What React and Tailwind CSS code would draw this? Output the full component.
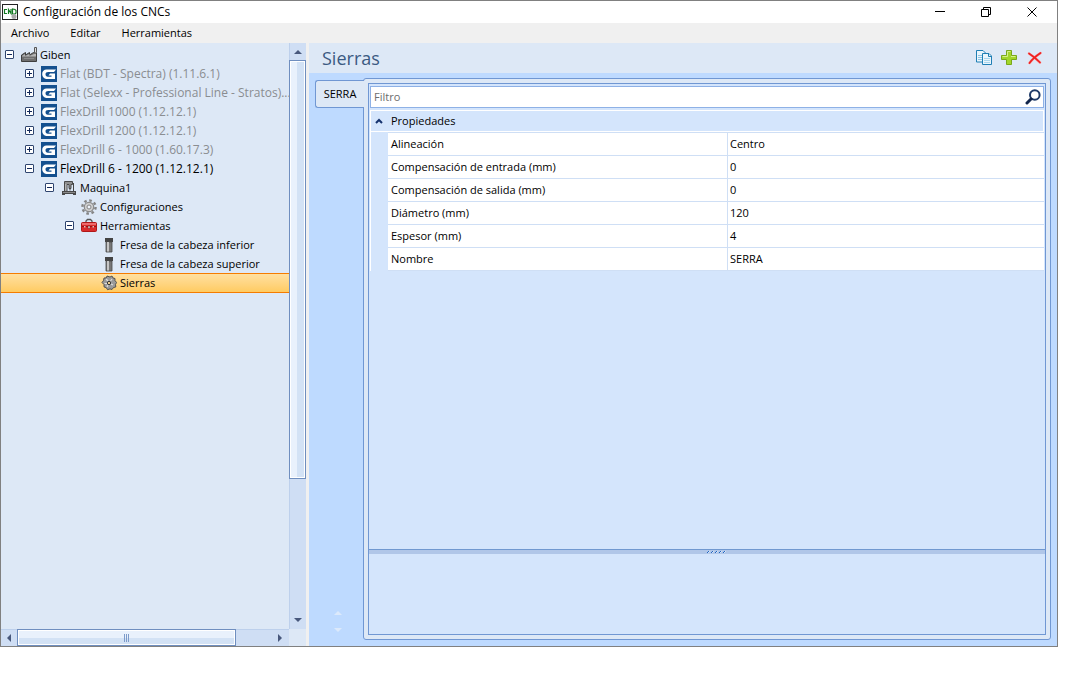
import React, { useState } from 'react'

const tree = [
  { label: 'Giben', level: 0, icon: 'factory', state: 'open' },
  { label: 'Flat (BDT - Spectra) (1.11.6.1)', level: 1, icon: 'giben', state: 'closed', muted: true },
  { label: 'Flat (Selexx - Professional Line - Stratos)...', level: 1, icon: 'giben', state: 'closed', muted: true },
  { label: 'FlexDrill 1000 (1.12.12.1)', level: 1, icon: 'giben', state: 'closed', muted: true },
  { label: 'FlexDrill 1200 (1.12.12.1)', level: 1, icon: 'giben', state: 'closed', muted: true },
  { label: 'FlexDrill 6 - 1000 (1.60.17.3)', level: 1, icon: 'giben', state: 'closed', muted: true },
  { label: 'FlexDrill 6 - 1200 (1.12.12.1)', level: 1, icon: 'giben', state: 'open' },
  { label: 'Maquina1', level: 2, icon: 'machine', state: 'open' },
  { label: 'Configuraciones', level: 3, icon: 'gear' },
  { label: 'Herramientas', level: 3, icon: 'toolbox', state: 'open' },
  { label: 'Fresa de la cabeza inferior', level: 4, icon: 'cutter' },
  { label: 'Fresa de la cabeza superior', level: 4, icon: 'cutter' },
  { label: 'Sierras', level: 4, icon: 'saw' }
]

const properties = [
  ['Alineación', 'Centro'],
  ['Compensación de entrada (mm)', '0'],
  ['Compensación de salida (mm)', '0'],
  ['Diámetro (mm)', '120'],
  ['Espesor (mm)', '4'],
  ['Nombre', 'SERRA']
]

const indent = ['pl-1', 'pl-6 text-xs', 'pl-11', 'pl-16', 'pl-[84px]']

const icons = {
  factory: (
    <>
      <path d="M.5 14.500V8l4-2.500V8l4-2.500V8l4-2.500h3v9z" fill="#6e6e6e" stroke="#3f3f3f" />
      <path d="M1 9l3-2v2l4.500-2v2L13 7h2v2.500H1z" fill="#b5b5b5" />
      <path d="M3 11.500h10" stroke="#8c8c8c" />
      <path d="M13.500 5.500v-5h2v5" fill="#ddd" stroke="#555" />
    </>
  ),
  giben: (
    <>
      <rect width="16" height="16" fill="#14508f" />
      <path d="M15 3.500H5.500C3 3.500 1.200 5.200 1.200 8s2 5 4.800 5h8V7.500H9L7.500 9.500h3v1.200H6.800C5.300 10.700 4.500 9.600 4.500 8.300c0-1.600 1-2.300 2.700-2.300H13z" fill="#fff" />
    </>
  ),
  machine: (
    <>
      <path d="M3.500 1.500h8v3H10v4H8v-4H6v6.500H3.500z" fill="#8f8f8f" stroke="#4a4a4a" />
      <path d="M4.800 4v7" stroke="#c4c4c4" />
      <path d="M9 8.500v2M12.500 3v8" stroke="#444" />
      <path d="M1 11h14v4h-3v-1H4v1H1z" fill="#4a4a4a" />
      <path d="M2 12.500h12" stroke="#8a8a8a" />
    </>
  ),
  gear: (
    <>
      <circle cx="8" cy="8" r="6.600" fill="none" stroke="#858585" strokeWidth="2.400" strokeDasharray="2.600 2.584" />
      <circle cx="8" cy="8" r="4.700" fill="#cfcfcf" stroke="#8c8c8c" strokeWidth="1.200" />
      <circle cx="8" cy="8" r="2" fill="#eef3fa" stroke="#858585" />
    </>
  ),
  toolbox: (
    <>
      <path d="M5 5V3l1.500-1.500h3L11 3v2" fill="none" stroke="#555" strokeWidth="1.300" />
      <rect x=".5" y="4.500" width="15" height="9" rx="1" fill="#d92b2b" stroke="#b01818" />
      <path d="M1 5.500h14M1 6.500h14" stroke="#ee6a6a" />
      <path d="M1 8.500h14" stroke="#9a1212" />
      <path d="M7 8h2v2.500H7z" fill="#ddd" stroke="#7a1010" strokeWidth=".5" />
      <path d="M3 8h1.500v1.500H3zM11.500 8H13v1.500h-1.500z" fill="#e6bcbc" />
    </>
  ),
  cutter: (
    <>
      <path d="M4 1h8v4H4z" fill="#444" />
      <path d="M5 5h6v10H5z" fill="#777" stroke="#4a4a4a" strokeWidth=".8" />
      <path d="M7 5v9.500" stroke="#c6c6c6" strokeWidth="2" />
    </>
  ),
  saw: (
    <>
      <path d="M6 1l3 1 2-1 1 2 2 .5v2l1.500 2-1 2 .3 2.500-2.300.5-1.500 2-2-.6-2.500.8-1.200-2-2.300-.8V9.500L1 7.500l1.500-2L3 3l2.400-.2z" fill="#9a9a9a" stroke="#484848" strokeWidth=".9" />
      <path d="M5 4l2 2M11 4L9.500 6M12 10l-2-1M6 12l1-2M3.500 8.500H6" stroke="#ddd" strokeWidth="1.200" />
      <circle cx="8" cy="8" r="1.600" fill="#ffe0a0" stroke="#333" />
    </>
  )
}

function Expander({ state }) {
  if (!state) return <span className="w-[9px] shrink-0" />
  return (
    <svg viewBox="0 0 9 9" className="size-[9px] shrink-0" aria-hidden="true">
      <rect x=".5" y=".5" width="8" height="8" rx=".5" fill="#fff" stroke="#2f456f" />
      <path d={state === 'closed' ? 'M2 4.500h5M4.500 2v5' : 'M2 4.500h5'} stroke="#13295a" />
    </svg>
  )
}

function TreeRow({ item, selected, onSelect }) {
  return (
    <li role="treeitem" aria-selected={selected} className={selected ? 'h-5' : 'h-[19px]'}>
      <button
        type="button"
        onClick={onSelect}
        className={`flex w-full h-full items-center text-left ${indent[item.level]} ${
          selected ? 'border-y border-[#f57c00] bg-linear-to-b from-[#ffe0a0] to-[#ffcb61]' : ''
        } ${item.muted ? 'text-[#8a8d91]' : 'text-black'}`}
      >
        <Expander state={item.state} />
        <svg viewBox="0 0 16 16" className="size-4 shrink-0 ml-[7px] mr-[3px]" aria-hidden="true">
          {icons[item.icon]}
        </svg>
        <span className="whitespace-nowrap">{item.label}</span>
      </button>
    </li>
  )
}

function Arrow({ d }) {
  return (
    <svg viewBox="0 0 8 8" className="size-2" aria-hidden="true">
      <path d={d} fill="currentColor" />
    </svg>
  )
}

const UP = 'M4 2l4 4H0z'
const DOWN = 'M0 2h8L4 6z'
const LEFT = 'M2 4l4-4v8z'
const RIGHT = 'M6 4L2 0v8z'

export default function App() {
  const [selected, setSelected] = useState(12)
  const [filter, setFilter] = useState('')

  return (
    <div className="h-screen bg-white pr-[31px] pb-[45px] font-['Open_Sans','Noto_Sans',sans-serif] text-[11px] leading-4 text-black">
      <div className="flex h-full flex-col border border-[#808080]">
        {/* Title bar */}
        <header className="flex h-[22px] shrink-0 items-center bg-white pl-px">
          <svg viewBox="0 0 16 16" className="size-4" aria-hidden="true">
            <rect x=".5" y=".5" width="15" height="15" fill="#fff" stroke="#222" />
            <path d="M5 5.500H2.500v4H5M6.500 10V5.500L9 9.500V5M10.500 5v5h2.500l1-1V6.500L13 5.500z" fill="none" stroke="#147a22" strokeWidth="1.200" />
            <circle cx="12" cy="12.500" r="2.500" fill="#aaa" />
          </svg>
          <h1 className="ml-[5px] grow text-xs">Configuración de los CNCs</h1>
          <button type="button" aria-label="Minimizar" className="flex w-[46px] justify-center">
            <svg viewBox="0 0 11 11" className="size-[11px]"><path d="M0 4.500h10" stroke="#000" /></svg>
          </button>
          <button type="button" aria-label="Restaurar" className="flex w-[46px] justify-center">
            <svg viewBox="0 0 11 11" className="size-[11px]" fill="none" stroke="#000">
              <path d="M.5 2.500h7v7h-7zM2.500 2.500v-2h7v7h-2" />
            </svg>
          </button>
          <button type="button" aria-label="Cerrar" className="mr-0.5 flex w-[46px] justify-center">
            <svg viewBox="0 0 11 11" className="size-[11px]"><path d="M.5.5l9 9M9.500.5l-9 9" stroke="#000" /></svg>
          </button>
        </header>

        {/* Menu */}
        <nav className="flex h-5 shrink-0 items-center gap-[21px] bg-[#f0f0f0] pl-2.5">
          <button type="button">Archivo</button>
          <button type="button">Editar</button>
          <button type="button">Herramientas</button>
        </nav>

        <div className="flex min-h-0 grow">
          {/* Tree */}
          <aside className="flex w-[305px] shrink-0 flex-col bg-[#dde8f6]">
            <div className="flex min-h-0 grow">
              <ul role="tree" className="min-w-0 grow pt-0.5">
                {tree.map((item, i) => (
                  <TreeRow key={i} item={item} selected={selected === i} onSelect={() => setSelected(i)} />
                ))}
              </ul>
              <div className="flex w-[17px] shrink-0 flex-col border-l border-[#bdd0ec] bg-[#cfdef4] text-[#48587c]">
                <button type="button" aria-label="Subir" className="flex h-[17px] items-center justify-center">
                  <Arrow d={UP} />
                </button>
                <div className="-ml-px h-[419px] border border-[#6f8ebf] bg-linear-to-r from-[#e9f1fc] from-50% to-[#d3e2f5] to-50% ring-1 ring-inset ring-white" />
                <button type="button" aria-label="Bajar" className="mt-auto flex h-[18px] items-center justify-center">
                  <Arrow d={DOWN} />
                </button>
              </div>
            </div>
            <div className="flex h-[17px] shrink-0">
              <div className="flex grow items-stretch border-t border-[#bdd0ec] bg-[#cfdef4] text-[#48587c]">
                <button type="button" aria-label="Izquierda" className="flex w-4 items-center justify-center">
                  <Arrow d={LEFT} />
                </button>
                <div className="-mt-px flex w-[219px] items-center justify-center gap-px border border-[#6f8ebf] bg-linear-to-b from-[#e9f1fc] from-50% to-[#d3e2f5] to-50% ring-1 ring-inset ring-white">
                  <span className="h-2 w-px bg-[#7d9bca]" />
                  <span className="h-2 w-px bg-[#7d9bca]" />
                  <span className="h-2 w-px bg-[#7d9bca]" />
                </div>
                <button type="button" aria-label="Derecha" className="ml-auto flex w-[18px] items-center justify-center">
                  <Arrow d={RIGHT} />
                </button>
              </div>
              <div className="w-[17px]" />
            </div>
          </aside>

          <div className="w-[3px] shrink-0 bg-[#f0f0f0]" />

          {/* Details */}
          <main className="flex min-w-0 grow flex-col bg-[#bedaff]">
            <div className="flex h-[30px] shrink-0 items-center bg-[#dde8f6] pl-[13px] pr-3.5">
              <h2 className="grow text-lg leading-6 text-[#3b5a82]">Sierras</h2>
              <div className="flex items-center gap-2">
                <button type="button" aria-label="Duplicar">
                  <svg viewBox="0 0 17 16" className="h-4 w-[17px]" fill="#eaf5fc" stroke="#1f7fb5">
                    <path d="M.5.5H7l2.500 2.500v9h-9z" />
                    <path d="M2 5.500h5M2 7.500h4M2 9.500h4" stroke="#8cc4e4" />
                    <path d="M6.500 3.500H13l2.500 2.500v8.500h-9z" />
                    <path d="M12.500 4v2.500H15" />
                    <path d="M8 8.500h6M8 10.500h6M8 12.500h6" stroke="#a9d6ee" />
                  </svg>
                </button>
                <button type="button" aria-label="Agregar">
                  <svg viewBox="0 0 16 16" className="size-4">
                    <path d="M5.500.5h5v5h5v4h-5v5h-5v-5h-5v-4h5z" fill="#a2d62a" stroke="#79a81a" />
                    <path d="M6.500 6.500v-5h3M1.500 6.500h5M10 6.500h4.500" fill="none" stroke="#d6f08c" />
                  </svg>
                </button>
                <button type="button" aria-label="Eliminar" className="ml-0.5">
                  <svg viewBox="0 0 16 16" className="size-4" fill="none" strokeLinecap="round">
                    <path d="M2 3.500c4 2.500 8 6 11 9M13.500 3C9 6 5 9.500 2.500 13" stroke="#f8a5a5" strokeWidth="2.600" />
                    <path d="M2 3.500c4 2.500 8 6 11 9M13.500 3C9 6 5 9.500 2.500 13" stroke="#ee2222" strokeWidth="1.700" />
                  </svg>
                </button>
              </div>
            </div>

            <div className="flex min-h-0 grow pt-[5px] pr-1.5 pb-1.5 pl-1.5">
              <div className="z-10 -mr-px flex w-[49px] shrink-0 flex-col">
                <button
                  type="button"
                  role="tab"
                  aria-selected="true"
                  className="mt-0.5 h-7 rounded-l-[3px] border border-r-0 border-[#7097d3] bg-[#dde8f6]"
                >
                  SERRA
                </button>
                <div className="mt-auto mb-1.5 mr-1 flex flex-col items-center gap-[9px] text-[#dce9fb]">
                  <button type="button" aria-label="Anterior" className="flex"><Arrow d={UP} /></button>
                  <button type="button" aria-label="Siguiente" className="flex"><Arrow d={DOWN} /></button>
                </div>
              </div>

              <div className="flex min-w-0 grow rounded-[3px] border border-[#7097d3] bg-[#dde8f6] p-1">
                <div className="flex min-w-0 grow flex-col border border-[#7097d3] bg-[#d4e5fc]">
                  <div className="mx-px mt-0.5 flex h-[22px] shrink-0 items-center border border-[#8eb1e6] bg-white pl-[3px] pr-0.5">
                    <input
                      type="text"
                      aria-label="Filtro"
                      placeholder="Filtro"
                      value={filter}
                      onChange={(e) => setFilter(e.target.value)}
                      className="min-w-0 grow outline-none placeholder:text-[#6d6d6d]"
                    />
                    <button type="button" aria-label="Buscar">
                      <svg viewBox="0 0 16 16" className="size-4" fill="none" stroke="#1e3a68">
                        <circle cx="9.800" cy="6" r="4.800" strokeWidth="2" />
                        <path d="M6 10l-4 4" stroke="#12264c" strokeWidth="3" strokeLinecap="round" />
                      </svg>
                    </button>
                  </div>

                  <div className="mt-0.5 mx-px shrink-0 border-l border-white">
                    <button type="button" className="flex h-[22px] w-full items-center border-y border-r border-white pl-1">
                      <svg viewBox="0 0 8 6" className="mr-2 h-1.5 w-2" fill="none" stroke="#15336e" strokeWidth="2">
                        <path d="M1 5l3-3 3 3" />
                      </svg>
                      Propiedades
                    </button>
                    <div className="pl-[17px]">
                      <table className="w-full table-fixed border-collapse border-l border-white bg-white">
                        <colgroup>
                          <col className="w-[339px]" />
                          <col />
                        </colgroup>
                        <tbody>
                          {properties
                            .filter(([name]) => name.toLowerCase().includes(filter.toLowerCase()))
                            .map(([name, value]) => (
                              <tr key={name} className="h-[23px] border-y border-[#cfdff5]">
                                <th scope="row" className="border-r border-[#cfdff5] pl-0.5 text-left font-normal">{name}</th>
                                <td className="pl-0.5">{value}</td>
                              </tr>
                            ))}
                        </tbody>
                      </table>
                    </div>
                  </div>

                  {/* Description pane */}
                  <div className="mt-auto flex h-[5px] shrink-0 items-start justify-center border-t border-[#7098d0] bg-[#b0c6e8] pl-5">
                    <svg viewBox="0 0 20 3" className="h-[3px] w-5" stroke="#1f66c4">
                      <path d="M0 3l2-2M4 3l2-2M8 3l2-2M12 3l2-2M16 3l2-2" />
                      <path d="M1 3l2-2M5 3l2-2M9 3l2-2M13 3l2-2M17 3l2-2" stroke="#fff" strokeWidth=".5" />
                    </svg>
                  </div>
                  <div className="h-20 shrink-0" />
                </div>
              </div>
            </div>
          </main>
        </div>
      </div>
    </div>
  )
}
